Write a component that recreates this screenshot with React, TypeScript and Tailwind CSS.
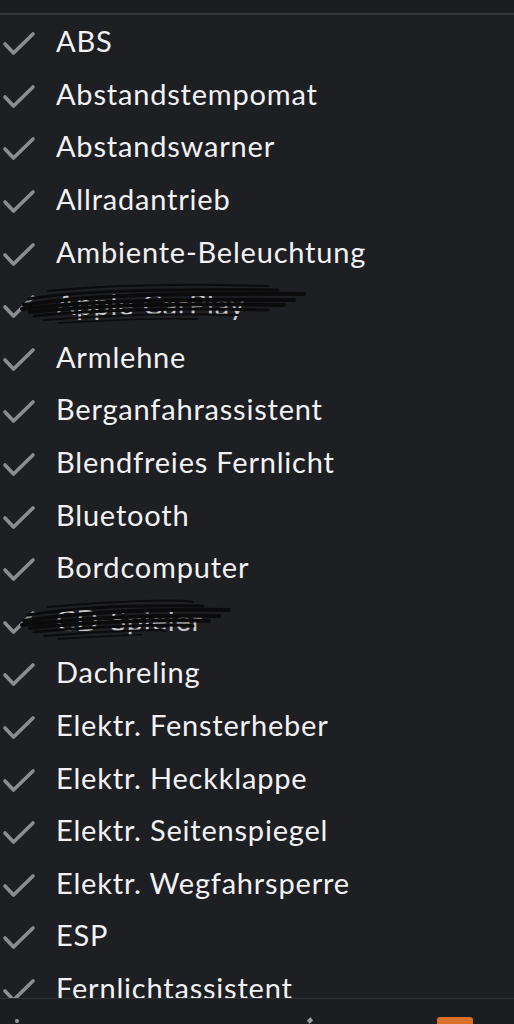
import React from 'react';

const items = [
  'ABS',
  'Abstandstempomat',
  'Abstandswarner',
  'Allradantrieb',
  'Ambiente-Beleuchtung',
  'Apple CarPlay',
  'Armlehne',
  'Berganfahrassistent',
  'Blendfreies Fernlicht',
  'Bluetooth',
  'Bordcomputer',
  'CD-Spieler',
  'Dachreling',
  'Elektr. Fensterheber',
  'Elektr. Heckklappe',
  'Elektr. Seitenspiegel',
  'Elektr. Wegfahrsperre',
  'ESP',
  'Fernlichtassistent',
];

// the two crossed out entries
const scribbled = ['Apple CarPlay', 'CD-Spieler'];

function Check() {
  return (
    <svg width="34" height="26" viewBox="0 0 34 26" fill="none">
      <path d="M3 14l8.5 9L31 4" stroke="#8c8d91" strokeWidth="3.6" strokeLinecap="round" strokeLinejoin="round" />
    </svg>
  );
}

function Scribble({ width }: { width: number }) {
  const w = width;
  return (
    <svg
      className="absolute left-[18px] top-[3px] pointer-events-none"
      width={w}
      height="48"
      viewBox={`0 0 ${w} 48`}
      fill="none"
    >
      <path d={`M30 10 C 90 4, 160 2, ${w - 40} 5`} stroke="#0b0b0c" strokeWidth="2" strokeLinecap="round" />
      <path d={`M10 18 C 60 10, 130 8, ${w - 30} 9`} stroke="#0b0b0c" strokeWidth="3" strokeLinecap="round" />
      <path d={`M6 24 C 70 14, 150 12, ${w - 4} 13`} stroke="#0b0b0c" strokeWidth="4" strokeLinecap="round" />
      <path d={`M4 28 C 70 20, 150 18, ${w - 14} 19`} stroke="#0b0b0c" strokeWidth="4" strokeLinecap="round" />
      <path d={`M12 31 C 80 24, 160 22, ${w - 24} 24`} stroke="#0b0b0c" strokeWidth="4" strokeLinecap="round" />
      <path d={`M16 35 C 90 28, 170 27, ${w - 40} 29`} stroke="#0b0b0c" strokeWidth="3" strokeLinecap="round" />
      <path d={`M26 39 C 100 33, 160 32, ${w - 70} 34`} stroke="#0b0b0c" strokeWidth="2" strokeLinecap="round" />
      <path d={`M40 42 C 110 38, 150 37, ${w - 110} 38`} stroke="#0b0b0c" strokeWidth="1.5" strokeLinecap="round" />
    </svg>
  );
}

export default function App() {
  return (
    <div className="w-[514px] h-[1024px] overflow-hidden bg-[#1e1f23] flex flex-col" style={{ fontFamily: 'Lato, "Open Sans", sans-serif' }}>
      <div className="h-[15px] bg-[#1c1d21] border-b-2 border-[#35363a] shrink-0" />
      <div className="h-[983px] overflow-hidden flex flex-col shrink-0">
        {items.map((item) => (
          <div key={item} className="relative h-[52.6px] shrink-0 flex items-center">
            <div className="w-[56px] shrink-0 pl-[2px] pt-[4px]">
              <Check />
            </div>
            <span className={`text-[29px] leading-[34px] tracking-[0.8px] ${scribbled.includes(item) ? 'text-[#c9c9cc]' : 'text-[#f2f2f4]'}`}>
              {item}
            </span>
            {scribbled.includes(item) && <Scribble width={item === 'CD-Spieler' ? 215 : 290} />}
          </div>
        ))}
      </div>
      <div className="flex-1 border-t border-[#303135] bg-[#1c1d21] relative">
        <div className="absolute left-[437px] top-[18px] w-[36px] h-[8px] rounded-t-[3px] bg-[#d9702a]" />
        <div className="absolute left-[15px] top-[20px] w-[4px] h-[4px] rounded-full bg-[#9a9a9e]" />
        <div className="absolute left-[308px] top-[19px] w-[4px] h-[5px] bg-[#9a9a9e] rotate-45" />
      </div>
    </div>
  );
}
